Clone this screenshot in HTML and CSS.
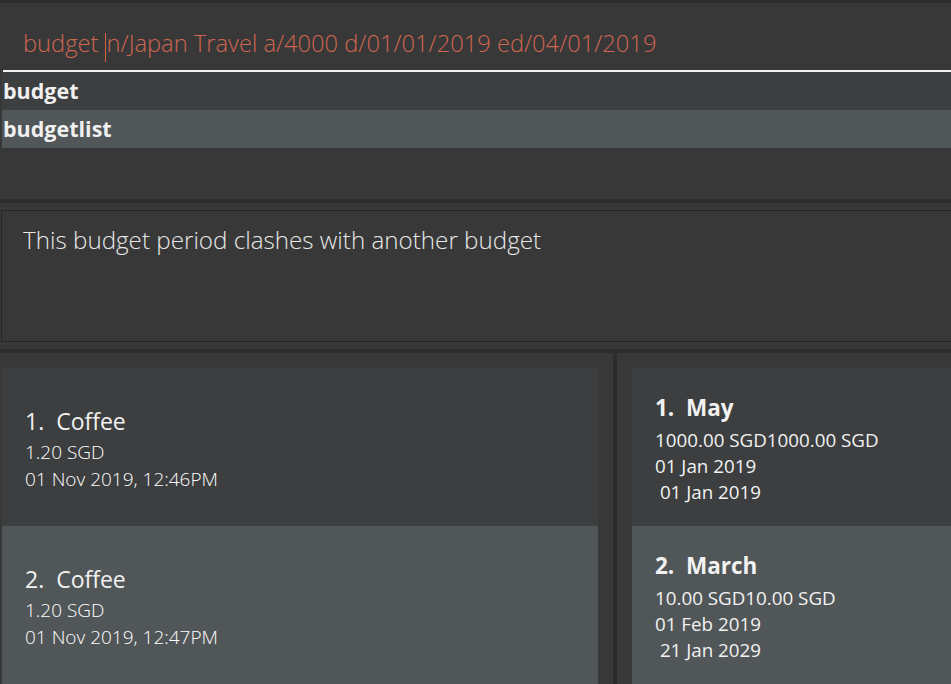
FILE: index.html
```html
<!DOCTYPE html>
<html lang="en">
<head>
<meta charset="utf-8">
<title>Budget</title>
<link rel="stylesheet" href="styles.css">
</head>
<body>
<div class="app">
  <div class="edge"></div>
  <div class="command">
    <div class="cmd-field"><span>budget&nbsp;</span><span class="caret"></span><span>n/Japan Travel a/4000 d/01/01/2019 ed/04/01/2019</span></div>
  </div>
  <ul class="suggestions">
    <li class="sugg">budget</li>
    <li class="sugg sugg-active">budgetlist</li>
  </ul>
  <div class="filler"></div>
  <div class="divider"></div>
  <div class="result-wrap">
    <div class="result">This budget period clashes with another budget</div>
  </div>
  <div class="divider"></div>
  <div class="lists">
    <div class="panel panel-left">
      <div class="card card-even left-card">
        <div class="title">1.&nbsp;&nbsp;Coffee</div>
        <div class="line">1.20 SGD</div>
        <div class="line">01 Nov 2019, 12:46PM</div>
      </div>
      <div class="card card-odd left-card">
        <div class="title">2.&nbsp;&nbsp;Coffee</div>
        <div class="line">1.20 SGD</div>
        <div class="line">01 Nov 2019, 12:47PM</div>
      </div>
    </div>
    <div class="splitter"></div>
    <div class="panel panel-right">
      <div class="card card-even right-card">
        <div class="title">1.&nbsp;&nbsp;May</div>
        <div class="line">1000.00 SGD1000.00 SGD</div>
        <div class="line">01 Jan 2019</div>
        <div class="line">&nbsp;01 Jan 2019</div>
      </div>
      <div class="card card-odd right-card">
        <div class="title">2.&nbsp;&nbsp;March</div>
        <div class="line">10.00 SGD10.00 SGD</div>
        <div class="line">01 Feb 2019</div>
        <div class="line">&nbsp;21 Jan 2029</div>
      </div>
    </div>
  </div>
</div>
</body>
</html>
```
FILE: styles.css
```css
* { box-sizing: border-box; }
html, body { margin: 0; padding: 0; }
body {
  background: #383838;
  font-family: "Open Sans", "Noto Sans", sans-serif;
  color: #ffffff;
  overflow: hidden;
}
.app {
  width: 951px;
  height: 684px;
  display: flex;
  flex-direction: column;
  background: #383838;
}
.edge {
  height: 3px;
  background: #2c2c2c;
  flex: none;
}
.command {
  height: 69px;
  padding-left: 3px;
  flex: none;
  display: flex;
}
.cmd-field {
  flex: 1;
  border-bottom: 2px solid #f2f2f2;
  padding-left: 20px;
  padding-top: 25px;
  font-size: 23.7px;
  font-weight: 300;
  color: #d06651;
  white-space: nowrap;
  line-height: 30px;
  display: flex;
  align-items: flex-start;
}
.cmd-field span { display: inline-block; white-space: pre; }
.caret {
  width: 1px;
  height: 29px;
  background: #d9603f;
  margin: 5px 1px 0 0;
}
.suggestions {
  list-style: none;
  margin: 0;
  padding: 0 0 0 2px;
  flex: none;
}
.sugg {
  height: 38px;
  line-height: 37px;
  padding-left: 1px;
  font-size: 21.5px;
  font-weight: 700;
  color: #f0f0f0;
  background: #3c3e3f;
}
.sugg-active { background: #515658; }
.filler { height: 51px; flex: none; }
.divider {
  height: 4px;
  background: #2c2c2c;
  flex: none;
}
.result-wrap {
  padding: 7px 0 7px 1px;
  flex: none;
}
.result {
  height: 132px;
  border: 1px solid #262626;
  border-right: none;
  padding: 13px 21px;
  font-size: 24.2px;
  font-weight: 300;
  color: #e8e8e8;
  line-height: 32px;
}
.lists {
  flex: 1;
  display: flex;
  min-height: 0;
}
.panel {
  display: flex;
  flex-direction: column;
  padding-top: 15px;
  min-width: 0;
}
.panel-left { width: 613px; padding-left: 2px; padding-right: 15px; flex: none; }
.panel-right { flex: 1; padding-left: 15px; }
.splitter { width: 4px; background: #2c2c2c; flex: none; }
.card {
  height: 158px;
  flex: none;
  display: flex;
  flex-direction: column;
  justify-content: center;
  padding-left: 23px;
  color: #f2f2f2;
}
.card-even { background: #3c3e3f; }
.card-odd { background: #515658; }
.title {
  font-size: 22.5px;
  line-height: 32px;
  margin-bottom: 3px;
  white-space: nowrap;
}
.line {
  font-size: 18.8px;
  white-space: nowrap;
}
.left-card { padding-top: 3px; }
.left-card .title { font-size: 23px; font-weight: 500; margin-bottom: 2px; }
.left-card .line { font-size: 19px; font-weight: 300; line-height: 27px; color: #ffffff; }
.right-card { padding-top: 2px; }
.right-card .title { font-weight: 700; }
.right-card .line { font-weight: 400; line-height: 26px; }
```
